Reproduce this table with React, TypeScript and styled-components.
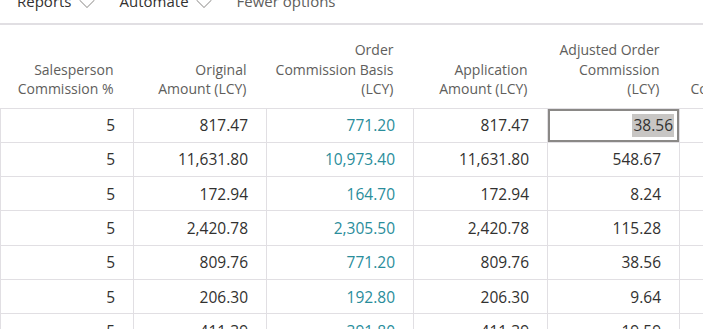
import React from "react";
import styled, { createGlobalStyle } from "styled-components";
import { ChevronDown } from "lucide-react";

const GlobalStyle = createGlobalStyle`
  html, body {
    margin: 0;
    padding: 0;
    background: #ffffff;
    overflow: hidden;
  }
  body {
    font-family: "Open Sans", "Noto Sans", sans-serif;
    color: #323130;
  }
`;

type Row = {
  pct: string;
  original: string;
  basis: string;
  application: string;
  adjusted: string;
};

const rows: Row[] = [
  { pct: "5", original: "817.47", basis: "771.20", application: "817.47", adjusted: "38.56" },
  { pct: "5", original: "11,631.80", basis: "10,973.40", application: "11,631.80", adjusted: "548.67" },
  { pct: "5", original: "172.94", basis: "164.70", application: "172.94", adjusted: "8.24" },
  { pct: "5", original: "2,420.78", basis: "2,305.50", application: "2,420.78", adjusted: "115.28" },
  { pct: "5", original: "809.76", basis: "771.20", application: "809.76", adjusted: "38.56" },
  { pct: "5", original: "206.30", basis: "192.80", application: "206.30", adjusted: "9.64" },
  { pct: "5", original: "411.39", basis: "391.80", application: "411.39", adjusted: "19.59" },
];

function App() {
  return (
    <Page>
      <GlobalStyle />
      <Toolbar>
        <ToolButton>
          Reports <ChevronDown size={28} strokeWidth={0.9} />
        </ToolButton>
        <ToolButton>
          Automate <ChevronDown size={28} strokeWidth={0.9} />
        </ToolButton>
        <ToolButton $muted>Fewer options</ToolButton>
      </Toolbar>
      <Grid>
        <colgroup>
          <col style={{ width: 133 }} />
          <col style={{ width: 133 }} />
          <col style={{ width: 147 }} />
          <col style={{ width: 134 }} />
          <col style={{ width: 132 }} />
          <col style={{ width: 160 }} />
        </colgroup>
        <thead>
          <tr>
            <HeadCell>Salesperson<br />Commission %</HeadCell>
            <HeadCell>Original<br />Amount (LCY)</HeadCell>
            <HeadCell>Order<br />Commission Basis<br />(LCY)</HeadCell>
            <HeadCell>Application<br />Amount (LCY)</HeadCell>
            <HeadCell>Adjusted Order<br />Commission<br />(LCY)</HeadCell>
            <HeadCell $left>Commission</HeadCell>
          </tr>
        </thead>
        <tbody>
          {rows.map((row, index) => (
            <tr key={index}>
              <Cell>{row.pct}</Cell>
              <Cell>{row.original}</Cell>
              <Cell $link>{row.basis}</Cell>
              <Cell>{row.application}</Cell>
              {index === 0 ? (
                <SelectedCell>
                  <Highlight>{row.adjusted}</Highlight>
                </SelectedCell>
              ) : (
                <Cell>{row.adjusted}</Cell>
              )}
              <Cell />
            </tr>
          ))}
        </tbody>
      </Grid>
    </Page>
  );
}

const Page = styled.div`
  width: 703px;
  height: 329px;
  overflow: hidden;
`;

const Toolbar = styled.div`
  display: flex;
  align-items: flex-start;
  gap: 19px;
  height: 23px;
  padding-left: 17px;
  border-bottom: 2px solid #e1dfe3;
  overflow: hidden;
`;

const ToolButton = styled.div<{ $muted?: boolean }>`
  display: flex;
  align-items: center;
  gap: 1px;
  height: 20px;
  margin-top: -9px;
  font-size: 15px;
  line-height: 20px;
  color: ${(p) => (p.$muted ? "#605e5c" : "#323130")};
  svg {
    flex-shrink: 0;
    color: #a19f9d;
    margin: -1px 0 -7px 0;
  }
`;

const Grid = styled.table`
  table-layout: fixed;
  border-collapse: collapse;
  width: 839px;
`;

const HeadCell = styled.th<{ $left?: boolean }>`
  box-sizing: border-box;
  height: 83px;
  padding: 0 ${(p) => (p.$left ? "0" : "20px")} 9px ${(p) => (p.$left ? "11px" : "0")};
  vertical-align: bottom;
  text-align: ${(p) => (p.$left ? "left" : "right")};
  font-size: 14px;
  font-weight: 400;
  line-height: 19.5px;
  color: #605e5c;
  white-space: nowrap;
  overflow: hidden;
  border-bottom: 1px solid #e1dfe3;
`;

const Cell = styled.td<{ $link?: boolean }>`
  box-sizing: border-box;
  height: 34.33px;
  padding: 0 18px 0 0;
  text-align: right;
  font-size: 15.5px;
  color: ${(p) => (p.$link ? "#2a8d9b" : "#323130")};
  border: 1px solid #e1dfe3;
  white-space: nowrap;
`;

const SelectedCell = styled.td`
  box-sizing: border-box;
  height: 34.33px;
  padding: 0 5px 0 0;
  text-align: right;
  font-size: 15.5px;
  color: #323130;
  border: 1px solid #e1dfe3;
  box-shadow: inset 0 0 0 2px #8a8886;
`;

const Highlight = styled.span`
  display: inline-block;
  padding: 1px 1px;
  line-height: 21px;
  background: #c8c6c4;
`;

export default App;
